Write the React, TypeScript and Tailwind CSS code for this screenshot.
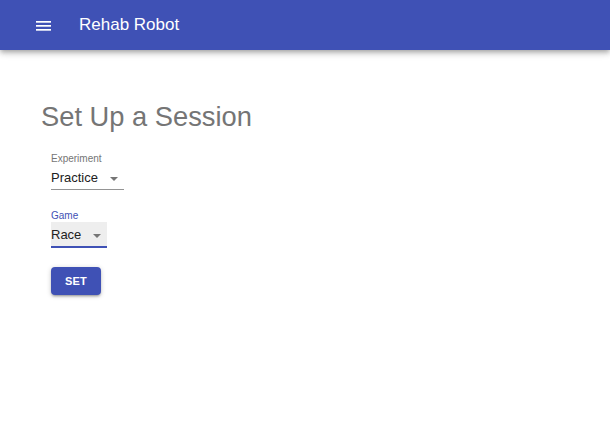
import React, { useState } from 'react';

const font = { fontFamily: '"Liberation Sans", Arial, sans-serif' };

function MenuIcon() {
  return (
    <svg width="15" height="10" viewBox="0 0 15 10" className="block">
      <rect x="0" y="0" width="15" height="1.7" fill="#ffffff" />
      <rect x="0" y="4" width="15" height="1.7" fill="#ffffff" />
      <rect x="0" y="8" width="15" height="1.7" fill="#ffffff" />
    </svg>
  );
}

function Arrow() {
  return (
    <svg width="8" height="4" viewBox="0 0 8 4" className="block">
      <path d="M0 0 L8 0 L4 4 Z" fill="#757575" />
    </svg>
  );
}

interface FieldProps {
  label: string;
  value: string;
  focused?: boolean;
}

function SelectField({ label, value, focused }: FieldProps) {
  return (
    <div className="flex flex-col items-start">
      <label
        className={`text-[10px] leading-[12px] ${focused ? 'text-[#3f51b5]' : 'text-[#757575]'}`}
      >
        {label}
      </label>
      <div
        className={`flex items-center pt-[4px] pb-[2px] pr-[6px] ${
          focused ? 'bg-[#eeeeee] border-b-2 border-[#3f51b5]' : 'border-b border-[#949494]'
        }`}
      >
        <span className="text-[13px] leading-[18px] text-[#212121]">{value}</span>
        <span className="ml-[12px] mt-[1px]">
          <Arrow />
        </span>
      </div>
    </div>
  );
}

export default function App() {
  const [experiment] = useState('Practice');
  const [game] = useState('Race');

  return (
    <div className="min-h-screen bg-white" style={font}>
      {/* App bar */}
      <header className="h-[50px] bg-[#3f51b5] flex items-center pl-[36px] shadow-[0_2px_4px_-1px_rgba(0,0,0,0.2),0_4px_5px_0_rgba(0,0,0,0.14),0_1px_10px_0_rgba(0,0,0,0.12)]">
        <button className="mt-[1px]">
          <MenuIcon />
        </button>
        <h1 className="ml-[28px] text-[17px] leading-[20px] text-white">Rehab Robot</h1>
      </header>

      <main className="pl-[41px] pt-[51px]">
        <h2 className="text-[27.3px] leading-[32px] text-[#757575]">Set Up a Session</h2>

        <form className="pl-[10px] pt-[20px] flex flex-col items-start">
          <SelectField label="Experiment" value={experiment} />
          <div className="mt-[20px]">
            <SelectField label="Game" value={game} focused />
          </div>
          <button
            type="button"
            className="mt-[19px] w-[50px] h-[28px] rounded-[4px] bg-[#3f51b5] text-white text-[11px] font-bold tracking-[0.2px] shadow-[0_1px_5px_0_rgba(0,0,0,0.2),0_2px_2px_0_rgba(0,0,0,0.14),0_3px_1px_-2px_rgba(0,0,0,0.12)]"
          >
            SET
          </button>
        </form>
      </main>
    </div>
  );
}
